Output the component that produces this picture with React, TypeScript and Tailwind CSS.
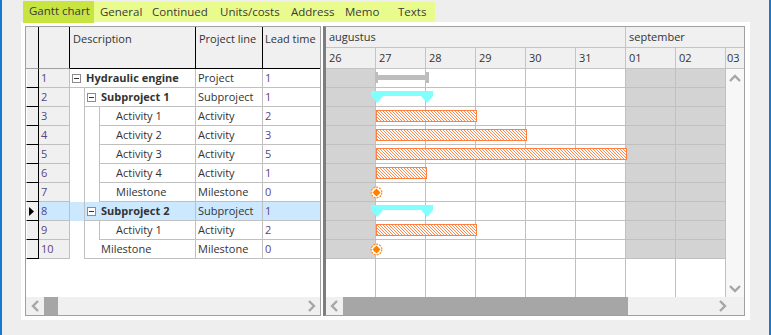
import React from "react";

type Gantt =
  | { kind: "project" }
  | { kind: "summary" }
  | { kind: "task"; days: number }
  | { kind: "milestone" };

type Row = {
  n: number;
  level: number;
  desc: string;
  group?: boolean;
  line: string;
  lead: number;
  sel?: boolean;
  gantt: Gantt;
};

const ROWS: Row[] = [
  { n: 1, level: 0, desc: "Hydraulic engine", group: true, line: "Project", lead: 1, gantt: { kind: "project" } },
  { n: 2, level: 1, desc: "Subproject 1", group: true, line: "Subproject", lead: 1, gantt: { kind: "summary" } },
  { n: 3, level: 2, desc: "Activity 1", line: "Activity", lead: 2, gantt: { kind: "task", days: 2 } },
  { n: 4, level: 2, desc: "Activity 2", line: "Activity", lead: 3, gantt: { kind: "task", days: 3 } },
  { n: 5, level: 2, desc: "Activity 3", line: "Activity", lead: 5, gantt: { kind: "task", days: 5 } },
  { n: 6, level: 2, desc: "Activity 4", line: "Activity", lead: 1, gantt: { kind: "task", days: 1 } },
  { n: 7, level: 2, desc: "Milestone", line: "Milestone", lead: 0, gantt: { kind: "milestone" } },
  { n: 8, level: 1, desc: "Subproject 2", group: true, line: "Subproject", lead: 1, sel: true, gantt: { kind: "summary" } },
  { n: 9, level: 2, desc: "Activity 1", line: "Activity", lead: 2, gantt: { kind: "task", days: 2 } },
  { n: 10, level: 1, desc: "Milestone", line: "Milestone", lead: 0, gantt: { kind: "milestone" } },
];

const DAYS = ["26", "27", "28", "29", "30", "31", "01", "02"];
const GREY_DAYS = [0, 6, 7];

const TABS = [
  { label: "Gantt chart", cls: "w-[71px] h-[22px] -mt-px bg-[#c8e441]" },
  { label: "General", cls: "w-[52px]" },
  { label: "Continued", cls: "w-[68px]" },
  { label: "Units/costs", cls: "w-[71px]" },
  { label: "Address", cls: "w-[54px]" },
  { label: "Memo", cls: "w-[53px]" },
  { label: "Texts", cls: "w-[43px]" },
];

function Chevron({ dir }: { dir: "left" | "right" | "up" | "down" }) {
  const horiz = dir === "left" || dir === "right";
  const pts = {
    left: "7,1 2,6 7,11",
    right: "2,1 7,6 2,11",
    up: "1,7 6,2 11,7",
    down: "1,2 6,7 11,2",
  }[dir];
  return (
    <svg width={horiz ? 9 : 12} height={horiz ? 12 : 9} viewBox={horiz ? "0 0 9 12" : "0 0 12 9"} className="shrink-0">
      <polyline points={pts} fill="none" stroke="#a6a6a6" strokeWidth="2.4" />
    </svg>
  );
}

function Toggle() {
  return (
    <div className="flex h-[9px] w-[9px] shrink-0 items-center justify-center border border-[#8c8c8c] bg-white">
      <div className="h-px w-[5px] bg-[#333]" />
    </div>
  );
}

function GridRow({ r }: { r: Row }) {
  const bg = r.sel ? "bg-[#cce8ff]" : "bg-white";
  return (
    <div className="flex h-[19px] shrink-0">
      <div className="flex w-[13px] shrink-0 items-center border-r border-b border-l border-r-black border-b-black border-l-white bg-[#f0f0f0] pl-[2px]">
        {r.sel && (
          <svg width="5" height="9" viewBox="0 0 5 9">
            <polygon points="0,0 5,4.5 0,9" fill="#000" />
          </svg>
        )}
      </div>
      <div className={`w-[31px] shrink-0 border-r border-b border-[#c0c0c0] pl-[2px] leading-[18px] text-[#5a4483] ${r.sel ? "bg-[#cce8ff]" : "bg-[#f0f0f0]"}`}>
        {r.n}
      </div>
      <div className={`flex w-[126px] shrink-0 ${bg}`}>
        {r.level >= 1 && <div className="w-[15px] shrink-0 border-r border-[#c0c0c0]" />}
        {r.level >= 2 && <div className="w-[15px] shrink-0 border-r border-[#c0c0c0]" />}
        <div className={`flex min-w-0 flex-1 items-center whitespace-nowrap border-r border-b border-[#c0c0c0] ${r.group ? "pl-[2px]" : "pl-[16px]"}`}>
          {r.group && <Toggle />}
          <span className={r.group ? "ml-[5px] font-bold" : ""}>{r.desc}</span>
        </div>
      </div>
      <div className={`w-[67px] shrink-0 whitespace-nowrap border-r border-b border-[#c0c0c0] pl-[2px] leading-[18px] ${bg}`}>
        {r.line}
      </div>
      <div className={`flex-1 border-b border-[#c0c0c0] pl-[2px] leading-[18px] text-[#5a4483] ${bg}`}>{r.lead}</div>
    </div>
  );
}

function GanttBar({ g }: { g: Gantt }) {
  if (g.kind === "project") {
    return (
      <>
        <div className="absolute top-[6px] left-[49px] h-[5px] w-[54px] bg-[#bdbdbd]" />
        <div className="absolute top-[3px] left-[49px] h-[11px] w-[3px] bg-[#bdbdbd]" />
        <div className="absolute top-[3px] left-[100px] h-[11px] w-[3px] bg-[#bdbdbd]" />
      </>
    );
  }
  if (g.kind === "summary") {
    return (
      <svg width="62" height="13" viewBox="0 0 62 13" className="absolute top-[3px] left-[45px]">
        <polygon points="0,0 62,0 62,5 56,12 50,5 12,5 6,12 0,5" fill="#80ffff" />
      </svg>
    );
  }
  if (g.kind === "milestone") {
    return (
      <svg width="13" height="13" viewBox="0 0 13 13" className="absolute top-[3px] left-[44px]">
        <circle cx="6.5" cy="6.5" r="5.3" fill="#fff" stroke="#ff8c1a" strokeWidth="1.2" strokeDasharray="2 1" />
        <polygon points="6.5,2.5 10.5,6.5 6.5,10.5 2.5,6.5" fill="#ff7f00" />
        <circle cx="6.5" cy="6.5" r="2.6" fill="#ff7f00" />
      </svg>
    );
  }
  return (
    <div className="absolute top-[3px] left-[50px] h-[12px] border border-[#ff7f3f] bg-white" style={{ width: g.days * 50 + 1 }}>
      <svg width="100%" height="100%" className="block">
        <rect width="100%" height="100%" fill="url(#hatch)" />
      </svg>
    </div>
  );
}

function GanttRow({ r }: { r: Row }) {
  return (
    <div className="relative flex h-[19px] shrink-0">
      {DAYS.map((d, i) => (
        <div
          key={d}
          className={`h-full w-[50px] shrink-0 border-r border-b border-[#c0c0c0] ${GREY_DAYS.includes(i) ? "bg-[#d3d3d3]" : "bg-white"}`}
        />
      ))}
      <GanttBar g={r.gantt} />
    </div>
  );
}

export default function App() {
  return (
    <div className="h-[335px] w-[771px] overflow-hidden border-x-2 border-[#1777d1] bg-[#eeeeee] pt-px pl-[19px] font-['Open_Sans',sans-serif] text-[11px] text-[#333]">
      <svg width="0" height="0" className="absolute">
        <defs>
          <pattern id="hatch" width="3" height="3" patternUnits="userSpaceOnUse">
            <rect x="0" y="0" width="1" height="1" fill="#ff8a4f" />
            <rect x="1" y="1" width="1" height="1" fill="#ff8a4f" />
            <rect x="2" y="2" width="1" height="1" fill="#ff8a4f" />
          </pattern>
        </defs>
      </svg>

      {/* tabs */}
      <div className="ml-[2px] flex h-[21px] items-start">
        <div className="flex h-[20px] mt-px bg-[#eafb8e]">
          {TABS.map((t) => (
            <div key={t.label} className={`shrink-0 whitespace-nowrap pl-[6px] leading-[19px] text-[12px] text-[#3a3a3a] ${t.cls}`}>
              <span className="text-[11.5px]">{t.label}</span>
            </div>
          ))}
        </div>
      </div>

      {/* panel */}
      <div className="flex h-[298px] w-[729px] gap-[2px] bg-white pt-[4px] pl-[4px]">
        {/* grid */}
        <div className="flex h-[290px] w-[296px] shrink-0 flex-col border border-[#a0a0a0]">
          <div className="flex h-[42px] shrink-0 bg-[#f0f0f0]">
            <div className="w-[13px] shrink-0 border-r border-b border-r-black border-b-[#a0a0a0]" />
            <div className="w-[31px] shrink-0 border-r border-b border-r-black border-b-[#a0a0a0]" />
            <div className="w-[126px] shrink-0 border-r border-b border-black pt-[4px] pl-[3px] leading-[15px]">Description</div>
            <div className="w-[67px] shrink-0 overflow-hidden whitespace-nowrap border-r border-b border-black pt-[4px] pl-[3px] leading-[15px]">
              Project line
            </div>
            <div className="flex-1 overflow-hidden whitespace-nowrap border-b border-black pt-[4px] pl-[2px] leading-[15px]">Lead time</div>
          </div>
          {ROWS.map((r) => (
            <GridRow key={r.n} r={r} />
          ))}
          <div className="flex-1 bg-white" />
          <div className="flex h-[18px] shrink-0 items-center bg-[#f0f0f0]">
            <div className="flex w-[18px] justify-center">
              <Chevron dir="left" />
            </div>
            <div className="h-full w-[14px] bg-[#a6a6a6]" />
            <div className="flex-1" />
            <div className="flex w-[18px] justify-center">
              <Chevron dir="right" />
            </div>
          </div>
        </div>

        {/* gantt */}
        <div className="flex h-[290px] w-[422px] shrink-0 flex-col border border-l-[3px] border-[#a0a0a0] border-l-[#7d7d7d]">
          <div className="flex h-[21px] shrink-0 border-b border-[#c4c4c4] bg-[#f0f0f0] leading-[20px]">
            <div className="w-[300px] shrink-0 border-r border-[#c4c4c4] pl-[3px]">augustus</div>
            <div className="flex-1 pl-[3px]">september</div>
          </div>
          <div className="flex h-[21px] shrink-0 border-b border-[#c4c4c4] bg-[#f0f0f0] leading-[20px]">
            {DAYS.map((d) => (
              <div key={d} className="w-[50px] shrink-0 border-r border-[#c4c4c4] pl-[3px]">
                {d}
              </div>
            ))}
            <div className="flex-1 pl-[1px]">03</div>
          </div>
          <div className="flex min-h-0 flex-1">
            <div className="flex w-[400px] shrink-0 flex-col">
              {ROWS.map((r) => (
                <GanttRow key={r.n} r={r} />
              ))}
              <div className="flex flex-1">
                {DAYS.map((d) => (
                  <div key={d} className="h-full w-[50px] shrink-0 border-r border-[#c0c0c0] bg-white" />
                ))}
              </div>
            </div>
            <div className="flex flex-1 flex-col items-center justify-between bg-[#f7f7f7] pt-[5px] pb-[4px]">
              <Chevron dir="up" />
              <Chevron dir="down" />
            </div>
          </div>
          <div className="flex h-[18px] shrink-0 items-center bg-[#f0f0f0]">
            <div className="flex w-[17px] justify-center">
              <Chevron dir="left" />
            </div>
            <div className="h-full w-[285px] bg-[#a6a6a6]" />
            <div className="flex-1" />
            <div className="flex w-[30px] justify-start pl-[4px]">
              <Chevron dir="right" />
            </div>
          </div>
        </div>
      </div>
    </div>
  );
}
